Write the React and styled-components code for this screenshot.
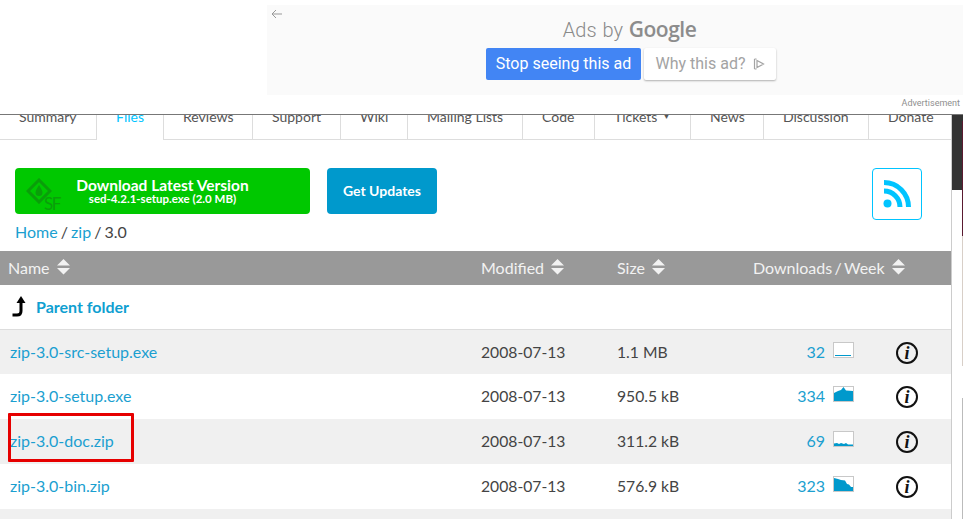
import styled, { createGlobalStyle } from "styled-components";

const Global = createGlobalStyle`
  html, body { margin: 0; padding: 0; background: #fff; }
  body { font-family: Lato, "Liberation Sans", sans-serif; color: #333; }
  a { color: #0099cc; text-decoration: none; }
`;

const Page = styled.div`
  position: relative;
  width: 963px;
  height: 519px;
  overflow: hidden;
  background: #fff;
`;

const AdArea = styled.div`
  height: 109px;
  padding: 5px 0 0 267px;
  border-bottom: 1px solid #777;
`;
const AdPanel = styled.div`
  position: relative;
  height: 90px;
  background: #fafafa;
  padding-left: 32px;
  box-sizing: border-box;
  display: flex;
  flex-direction: column;
  align-items: center;
`;
const BackArrow = styled.svg`
  position: absolute;
  left: 4px;
  top: 4px;
`;
const AdsBy = styled.div`
  font-family: Roboto, sans-serif;
  font-size: 20px;
  font-weight: 300;
  word-spacing: 1px;
  color: #8a8a8a;
  margin: 10px 0 0 -3px;
  height: 33px;
  line-height: 28px;
  b {
    font-family: "Open Sans", sans-serif;
    font-size: 21px;
    font-weight: 600;
    letter-spacing: -0.5px;
    color: #8c8c8c;
  }
`;
const AdButtons = styled.div`
  display: flex;
  gap: 3px;
`;
const AdButton = styled.div`
  height: 32px;
  width: ${(p) => p.$w}px;
  border-radius: 2px;
  background: ${(p) => (p.$primary ? "#4285f4" : "#fff")};
  color: ${(p) => (p.$primary ? "#fff" : "#a3a3a3")};
  box-shadow: ${(p) => (p.$primary ? "none" : "0 1px 2px rgba(0,0,0,.3)")};
  font-family: Roboto, sans-serif;
  font-size: 16px;
  padding-bottom: 1px;
  box-sizing: border-box;
  display: flex;
  align-items: center;
  justify-content: center;
  gap: 7px;
`;
const AdLabel = styled.div`
  font-family: Roboto, sans-serif;
  font-size: 9px;
  color: #8f8f8f;
  text-align: right;
  padding: 3px 3px 0 0;
  line-height: 11px;
`;

const Body = styled.div`
  display: flex;
`;
const Main = styled.div`
  width: 951px;
  border-right: 1px solid #ccc;
`;
const Tabs = styled.div`
  display: flex;
  height: 24px;
  overflow: hidden;
  border-bottom: 1px solid #ddd;
`;
const Tab = styled.div`
  padding: 0 19px;
  width: ${(p) => p.$w}px;
  box-sizing: border-box;
  flex: none;
  border-right: 1px solid #ddd;
  font-size: 14px;
  line-height: 17px;
  margin-top: -7px;
  white-space: nowrap;
  height: 40px;
  color: ${(p) => (p.$active ? "#00c4ff" : "#555")};
  sup {
    font-size: 8px;
    margin-left: 5px;
    vertical-align: 3px;
    line-height: 0;
  }
  &:last-child { border-right: 0; }
`;
const ActiveLine = styled.div`
  position: absolute;
  left: 97px;
  top: 139px;
  width: 66px;
  height: 1px;
  background: #fff;
`;
const Toolbar = styled.div`
  display: flex;
  align-items: flex-start;
  padding: 28px 29px 0 15px;
  height: 52px;
`;
const Green = styled.div`
  position: relative;
  width: 295px;
  height: 46px;
  background: #00c800;
  border-radius: 4px;
  color: #fff;
  text-align: center;
  padding-top: 9px;
  box-sizing: border-box;
  font-weight: 700;
  font-size: 15.5px;
  line-height: 16px;
  small {
    display: block;
    font-size: 11.5px;
    line-height: 12px;
  }
`;
const Logo = styled.div`
  position: absolute;
  left: 11px;
  top: 10px;
  width: 44px;
  height: 34px;
  svg { display: block; }
  span {
    position: absolute;
    left: 18px;
    top: 17px;
    font-size: 17px;
    line-height: 17px;
    font-weight: 400;
    letter-spacing: -1.5px;
    color: #0a9e0a;
  }
`;
const Blue = styled.div`
  margin-left: 17px;
  width: 110px;
  height: 46px;
  padding-bottom: 1px;
  box-sizing: border-box;
  background: #0099cc;
  border-radius: 4px;
  color: #fff;
  font-weight: 700;
  font-size: 14px;
  display: flex;
  align-items: center;
  justify-content: center;
`;
const Feed = styled.div`
  margin-left: auto;
  width: 50px;
  height: 52px;
  box-sizing: border-box;
  border: 1px solid #00c4ff;
  border-radius: 4px;
  display: flex;
  align-items: center;
  justify-content: center;
`;
const Crumbs = styled.div`
  padding-left: 15px;
  font-size: 16px;
  word-spacing: -1px;
  line-height: 20px;
  margin-top: 2px;
  height: 29px;
  color: #444;
  a { color: #1b9fd0; }
`;
const Grid = "481px 136px 136px 1fr";
const HeadRow = styled.div`
  display: grid;
  grid-template-columns: ${Grid};
  height: 34px;
  padding-bottom: 2px;
  box-sizing: border-box;
  align-items: center;
  background: #999;
  color: #f2f2f2;
  font-size: 16px;
  word-spacing: -1.7px;
`;
const HeadCell = styled.div`
  display: flex;
  align-items: center;
  gap: 7px;
  padding-left: ${(p) => p.$pad || 0}px;
`;
const ParentRow = styled.div`
  height: 44px;
  border-bottom: 1px solid #ddd;
  display: flex;
  align-items: center;
  padding-left: 12px;
  gap: 9px;
  a { font-weight: 700; font-size: 16px; color: #0f9fd1; margin-top: -2px; }
`;
const Row = styled.div`
  display: grid;
  grid-template-columns: ${Grid};
  height: ${(p) => p.$h}px;
  padding-bottom: ${(p) => p.$h - 44}px;
  box-sizing: border-box;
  align-items: center;
  background: ${(p) => (p.$alt ? "#f0f0f0" : "#fff")};
  font-size: 15.7px;
  color: #444;
`;
const NameCell = styled.a`
  padding-left: 10px;
  margin-top: -2px;
  font-size: 16px;
  color: #1b9fd0;
`;
const Dl = styled.div`
  display: flex;
  align-items: center;
  a {
    width: 72px;
    margin-top: -2px;
    text-align: right;
    color: #1b9fd0;
    font-size: 16px;
  }
`;
const Spark = styled.svg`
  margin-left: 8px;
  margin-top: -5px;
  flex: none;
  display: block;
`;
const Info = styled.span`
  margin: 2px 0 0 42px;
  width: 22px;
  height: 22px;
  box-sizing: border-box;
  border: 2px solid #111;
  border-radius: 50%;
  display: flex;
  align-items: center;
  justify-content: center;
  font-family: "Liberation Serif", serif;
  font-style: italic;
  font-weight: 700;
  font-size: 18px;
  line-height: 18px;
  color: #111;
`;
const Side = styled.div`
  width: 11px;
  display: flex;
`;
const DarkBlock = styled.div`
  width: 10px;
  height: 75px;
  background: #333;
`;
const SideEdge = styled.div`
  width: 1px;
  height: 404px;
  background: linear-gradient(#333 0 6px, #5a1a30 6px 121px, #d8cfc8 121px 251px, #fff 251px 283px, #bbb 283px);
`;
const Marker = styled.div`
  position: absolute;
  left: 8px;
  top: 413px;
  width: 126px;
  height: 49px;
  box-sizing: border-box;
  border: 3px solid #e60000;
  border-radius: 1px;
`;

function SortIcon() {
  return (
    <svg width="13" height="16" viewBox="0 0 13 16">
      <path d="M6.5 0 L13 6.5 H0 Z M0 9 H13 L6.5 15.5 Z" fill="#f2f2f2" />
    </svg>
  );
}

const tabs = [
  ["Summary", 97],
  ["Files", 67, true],
  ["Reviews", 89],
  ["Support", 88],
  ["Wiki", 67],
  ["Mailing Lists", 115],
  ["Code", 72],
  ["Tickets", 96],
  ["News", 73],
  ["Discussion", 105],
  ["Donate", 83],
];

const files = [
  ["zip-3.0-src-setup.exe", "1.1 MB", "32", "M2 13 H18 V14 H2 Z", true, 44],
  ["zip-3.0-setup.exe", "950.5 kB", "334", "M1 7 L5 5 L8 4 L10.5 1 L13 4.5 L20 5 V15 H1 Z", false, 45],
  ["zip-3.0-doc.zip", "311.2 kB", "69", "M1 12.5 L4 12 L6 13 L8 12 L11 13 L13 12 L15 13.5 L20 13.5 V15 H1 Z", true, 45],
  ["zip-3.0-bin.zip", "576.9 kB", "323", "M1 2 L5 3 L8 4 L12 4.5 L14 8 L16 8.5 L18 11 L20 11 V15 H1 Z", false, 45],
];

export default function App() {
  return (
    <Page>
      <Global />
      <AdArea>
        <AdPanel>
          <BackArrow width="12" height="10" viewBox="0 0 12 10">
            <path d="M11 5 H1.5 M5 1 L1 5 L5 9" fill="none" stroke="#999" strokeWidth="1" />
          </BackArrow>
          <AdsBy>
            Ads by <b>Google</b>
          </AdsBy>
          <AdButtons>
            <AdButton $primary $w={155}>Stop seeing this ad</AdButton>
            <AdButton $w={132}>
              Why this ad?
              <svg width="12" height="12" viewBox="0 0 12 12">
                <path d="M1.5 1 V11 M1.5 1 H3.5 M1.5 11 H3.5 M4 2.5 L10.5 6 L4 9.5 Z" fill="none" stroke="#a3a3a3" strokeWidth="1.2" />
              </svg>
            </AdButton>
          </AdButtons>
        </AdPanel>
        <AdLabel>Advertisement</AdLabel>
      </AdArea>
      <Body>
        <Main>
          <Tabs>
            {tabs.map(([label, w, active]) => (
              <Tab key={label} $w={w} $active={active}>
                {label}
                {label === "Tickets" && <sup>▼</sup>}
              </Tab>
            ))}
          </Tabs>
          <Toolbar>
            <Green>
              <Logo>
                <svg width="26" height="26" viewBox="0 0 26 26">
                  <path d="M13 2 L24 13 L13 24 L2 13 Z" fill="none" stroke="#0a9e0a" strokeWidth="3" />
                  <path d="M13 7 C14.5 10 16.5 12 16.5 14.5 A3.5 3.5 0 0 1 9.5 14.5 C9.5 12 11.5 10 13 7 Z" fill="#0a9e0a" />
                </svg>
                <span>SF</span>
              </Logo>
              Download Latest Version
              <small>sed-4.2.1-setup.exe (2.0 MB)</small>
            </Green>
            <Blue>Get Updates</Blue>
            <Feed>
              <svg width="30" height="30" viewBox="0 0 30 30">
                <circle cx="5.5" cy="24.5" r="4" fill="#00c4ff" />
                <path d="M2 12 A16 16 0 0 1 18 28" fill="none" stroke="#00c4ff" strokeWidth="5" />
                <path d="M2 3.5 A24.5 24.5 0 0 1 26.5 28" fill="none" stroke="#00c4ff" strokeWidth="5" />
              </svg>
            </Feed>
          </Toolbar>
          <Crumbs>
            <a>Home</a> / <a>zip</a> / 3.0
          </Crumbs>
          <HeadRow>
            <HeadCell $pad={8}>Name <SortIcon /></HeadCell>
            <HeadCell>Modified <SortIcon /></HeadCell>
            <HeadCell>Size <SortIcon /></HeadCell>
            <HeadCell>Downloads / Week <SortIcon /></HeadCell>
          </HeadRow>
          <ParentRow>
            <svg width="15" height="22" viewBox="0 0 15 22">
              <path d="M0.5 19 H5 Q9 19 9 15 V5" fill="none" stroke="#000" strokeWidth="3" />
              <path d="M9 0 L13.5 7 H4.5 Z" fill="#000" />
            </svg>
            <a>Parent folder</a>
          </ParentRow>
          {files.map(([name, size, count, spark, alt, h]) => (
            <Row key={name} $alt={alt} $h={h}>
              <NameCell>{name}</NameCell>
              <span>2008-07-13</span>
              <span>{size}</span>
              <Dl>
                <a>{count}</a>
                <Spark width="21" height="16" viewBox="0 0 21 16">
                  <rect x="0.5" y="0.5" width="20" height="15" fill="#fff" stroke="#c8c8c8" />
                  <path d={spark} fill="#0099cc" />
                </Spark>
                <Info>i</Info>
              </Dl>
            </Row>
          ))}
          <Row $alt $h={44} />
        </Main>
        <Side>
          <DarkBlock />
          <SideEdge />
        </Side>
      </Body>
      <ActiveLine />
      <Marker />
    </Page>
  );
}
